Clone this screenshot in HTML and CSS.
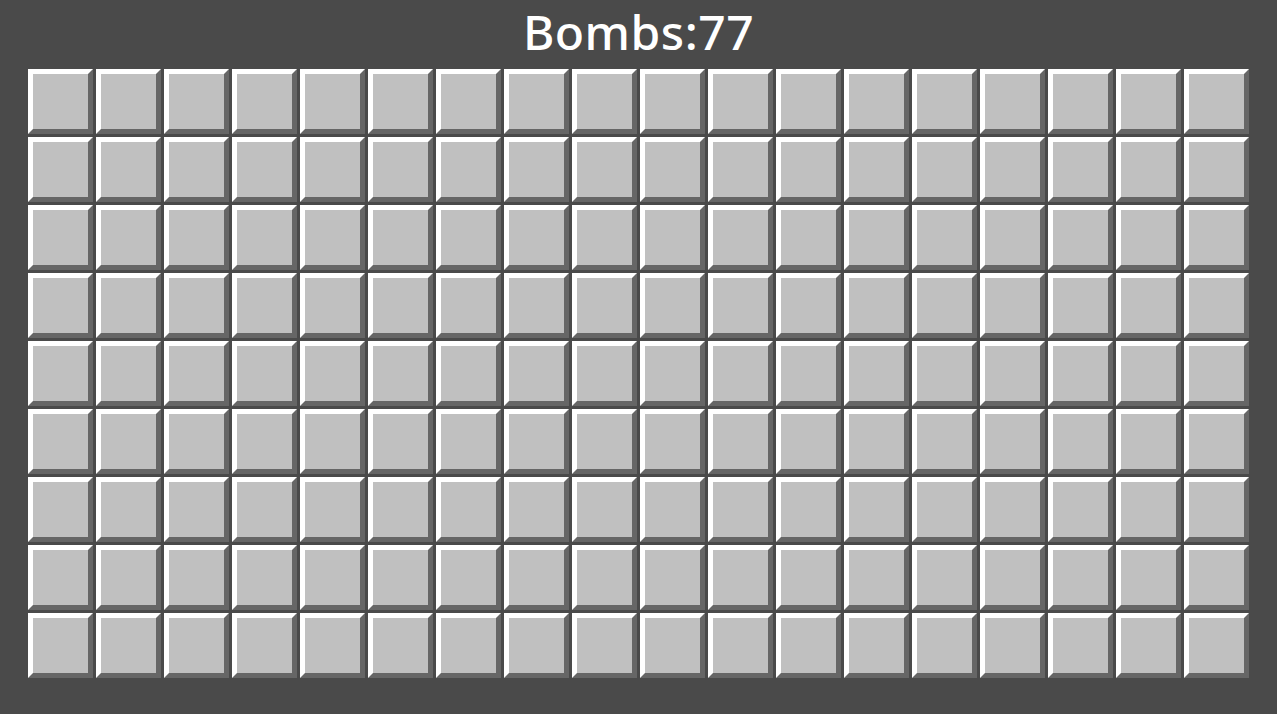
FILE: index.html
```html
<!DOCTYPE html>
<html>
<head>
<meta charset="utf-8">
<link rel="stylesheet" href="styles.css">
</head>
<body>
<div class="game">
  <h1 class="title">Bombs:77</h1>
  <div class="board" id="board"></div>
</div>
<script>
  var b = document.getElementById('board');
  for (var i = 0; i < 18 * 9; i++) {
    var c = document.createElement('div');
    c.className = 'cell';
    b.appendChild(c);
  }
</script>
</body>
</html>
```
FILE: styles.css
```css
html, body {
  margin: 0;
  padding: 0;
  background: #4a4a4a;
  height: 100%;
}
.game {
  display: flex;
  flex-direction: column;
  align-items: center;
}
.title {
  margin: 0;
  height: 69px;
  line-height: 63px;
  font-family: "Noto Sans", "Open Sans", sans-serif;
  font-weight: 500;
  font-size: 48px;
  letter-spacing: 0.5px;
  color: #ffffff;
}
.board {
  display: grid;
  grid-template-columns: repeat(18, 65px);
  grid-auto-rows: 65px;
  gap: 3px;
}
.cell {
  box-sizing: border-box;
  background: #c0c0c0;
  border: 5px solid;
  border-color: #ffffff #666666 #666666 #ffffff;
}
```
